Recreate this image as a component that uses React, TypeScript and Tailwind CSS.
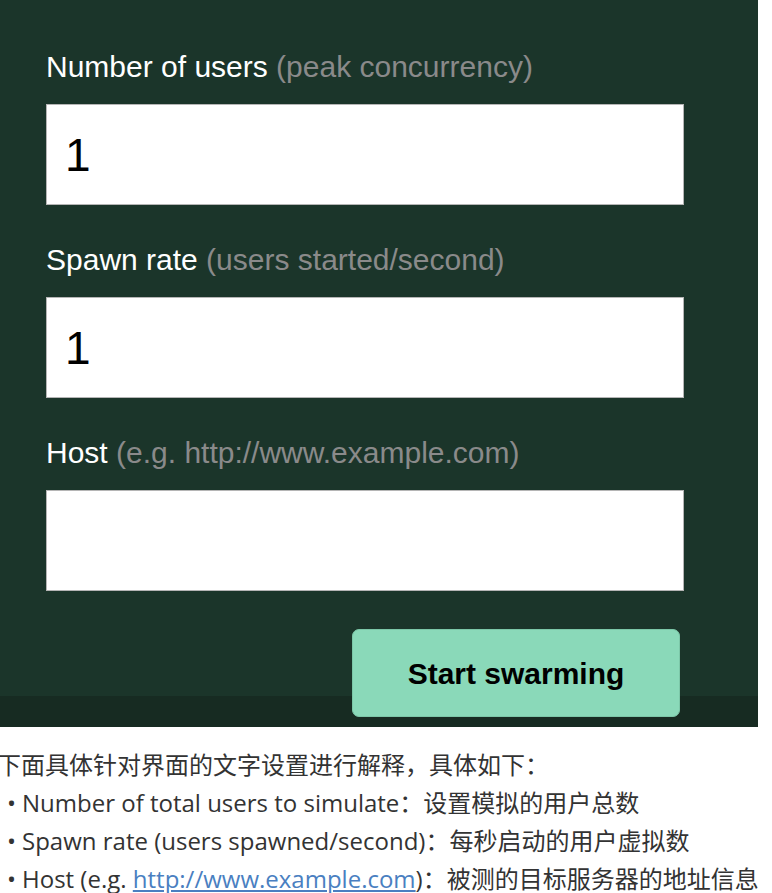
import React from 'react';

const fields = [
  { label: 'Number of users', hint: '(peak concurrency)', value: '1' },
  { label: 'Spawn rate', hint: '(users started/second)', value: '1' },
  { label: 'Host', hint: '(e.g. http://www.example.com)', value: '' },
];

export default function App() {
  return (
    <div className="w-[772px] min-h-[893px] bg-white overflow-hidden">
      {/* Swarm form panel */}
      <div className="w-[758px] bg-[#1b352a] font-['Liberation_Sans',Arial,sans-serif]">
        <div className="pt-[49px] pl-[46px] pr-[74px] flex flex-col gap-[37px]">
          {fields.map((f) => (
            <div key={f.label} className="flex flex-col">
              <label className="h-[36px] leading-[36px] text-[30px] text-white whitespace-nowrap">
                {f.label} <span className="text-[#8a8a8a]">{f.hint}</span>
              </label>
              <input
                readOnly
                value={f.value}
                className="mt-[19px] h-[101px] w-full bg-white border border-[#b5b5b5] px-[18px] text-[46px] text-black outline-none font-['Liberation_Sans',Arial,sans-serif]"
              />
            </div>
          ))}
        </div>
        <div className="pl-[46px] pr-[78px] mt-[38px] -mb-[21px] relative z-10 flex justify-end">
          <button className="w-[328px] h-[88px] rounded-[7px] bg-[#8ad9b9] border border-[#7cc7a8] text-[30px] font-bold text-black">
            Start swarming
          </button>
        </div>
        <div className="h-[31px] bg-[#172b22]" />
      </div>

      {/* Explanation text */}
      <div className="mt-[19px] -ml-[3px] text-[24px] leading-[38px] text-[#333] font-['Open_Sans','Noto_Sans_CJK_SC',sans-serif]">
        <p className="whitespace-nowrap">下面具体针对界面的文字设置进行解释，具体如下：</p>
        <ul>
          <li className="flex whitespace-nowrap">
            <span className="w-[25px] pl-[10px]">•</span>
            <span>Number of total users to simulate：设置模拟的用户总数</span>
          </li>
          <li className="flex whitespace-nowrap">
            <span className="w-[25px] pl-[10px]">•</span>
            <span>Spawn rate (users spawned/second)：每秒启动的用户虚拟数</span>
          </li>
          <li className="flex whitespace-nowrap">
            <span className="w-[25px] pl-[10px]">•</span>
            <span>
              Host (e.g. <a className="text-[#4a7fc1] underline">http://www.example.com</a>)：被测的目标服务器的地址信息
            </span>
          </li>
        </ul>
      </div>
    </div>
  );
}
